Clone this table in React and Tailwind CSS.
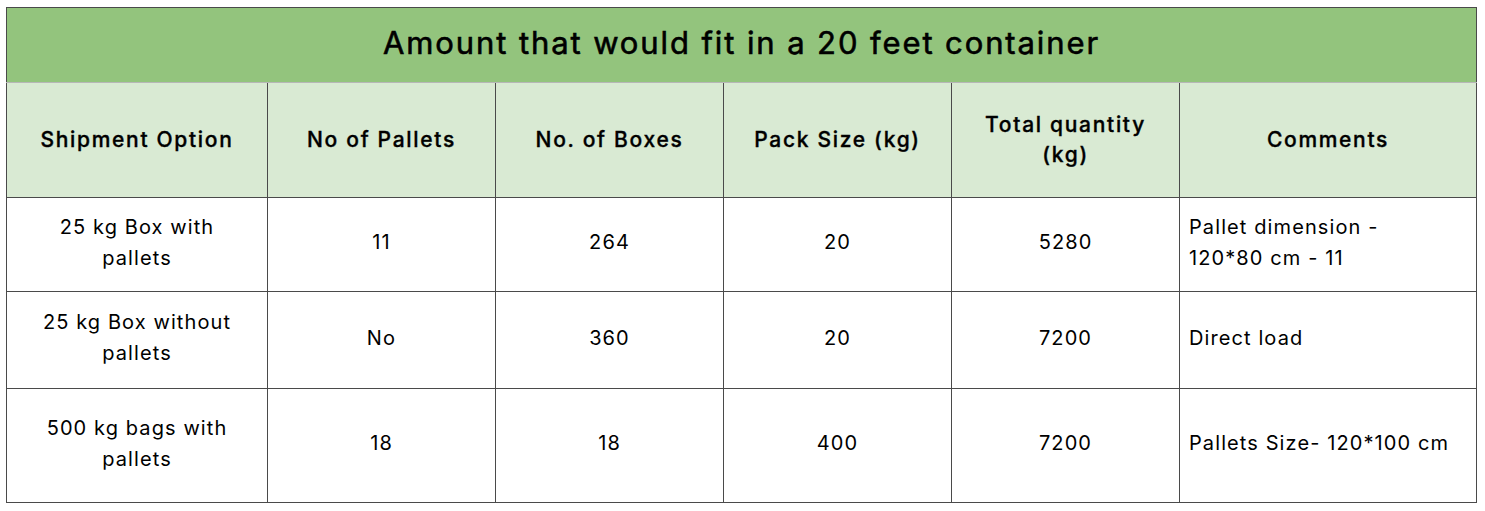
import React from "react";

const rows = [
  { option: ["25 kg Box with", "pallets"], pallets: "11", boxes: "264", pack: "20", total: "5280", comment: ["Pallet dimension -", "120*80 cm - 11"], h: "h-[94px]" },
  { option: ["25 kg Box without", "pallets"], pallets: "No", boxes: "360", pack: "20", total: "7200", comment: ["Direct load"], h: "h-[97px]" },
  { option: ["500 kg bags with", "pallets"], pallets: "18", boxes: "18", pack: "400", total: "7200", comment: ["Pallets Size- 120*100 cm"], h: "h-[114px]" },
];

const cell = "border border-[#4a4a4a] text-center align-middle";
const head = `${cell} font-medium [-webkit-text-stroke:0.35px_black]`;

export default function App() {
  return (
    <div className="w-[1485px] h-[511px] bg-white pl-[6px] pt-[7px] font-['Inter','Noto_Sans',sans-serif] text-black">
      <table className="table-fixed border-collapse w-[1470px]">
        <colgroup>
          <col className="w-[261px]" />
          <col className="w-[228px]" />
          <col className="w-[228px]" />
          <col className="w-[228px]" />
          <col className="w-[228px]" />
          <col className="w-[297px]" />
        </colgroup>
        <thead>
          <tr className="h-[75px] bg-[#93c47d]">
            <th colSpan={6} className="border border-[#4a4a4a] border-b-[#b7b7b7] text-[31px] leading-[34px] pb-[4px] font-normal [-webkit-text-stroke:0.6px_black] tracking-[1.9px]">
              Amount that would fit in a 20 feet container
            </th>
          </tr>
          <tr className="h-[115px] bg-[#d9ead3] text-[21px] leading-[30px] tracking-[1.7px]">
            <th className={head}>Shipment Option</th>
            <th className={head}>No of Pallets</th>
            <th className={head}>No. of Boxes</th>
            <th className={head}>Pack Size (kg)</th>
            <th className={head}>
              Total quantity
              <br />
              (kg)
            </th>
            <th className={head}>Comments</th>
          </tr>
        </thead>
        <tbody className="text-[20px] leading-[31px] tracking-[1.1px]">
          {rows.map((r, i) => (
            <tr key={i} className={r.h}>
              <td className={`${cell} pb-[4px]`}>
                {r.option[0]}
                <br />
                {r.option[1]}
              </td>
              <td className={`${cell} pb-[4px]`}>{r.pallets}</td>
              <td className={`${cell} pb-[4px]`}>{r.boxes}</td>
              <td className={`${cell} pb-[4px]`}>{r.pack}</td>
              <td className={`${cell} pb-[4px]`}>{r.total}</td>
              <td className="border border-[#4a4a4a] align-middle text-left pl-[9px] pb-[4px]">
                {r.comment.map((c, j) => (
                  <div key={j}>{c}</div>
                ))}
              </td>
            </tr>
          ))}
        </tbody>
      </table>
    </div>
  );
}
